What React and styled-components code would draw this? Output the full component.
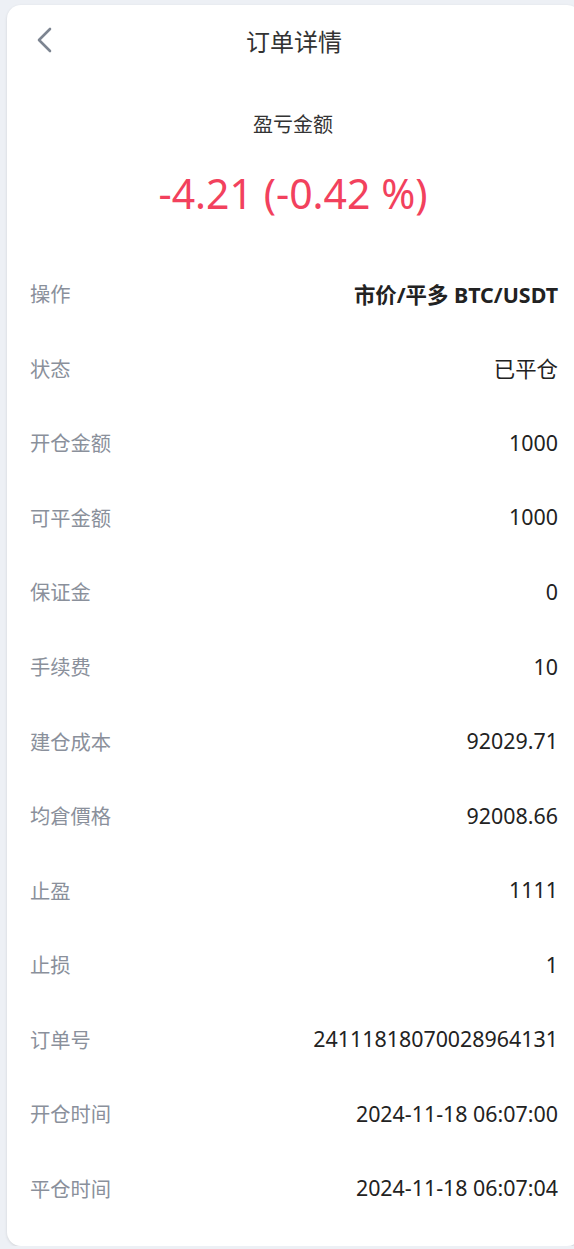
import React from "react";
import styled, { createGlobalStyle } from "styled-components";

const Global = createGlobalStyle`
  html, body { margin: 0; padding: 0; overflow: hidden; }
  body {
    background: #edf0f5;
    font-family: "Noto Sans", "Noto Sans CJK SC", sans-serif;
  }
`;

const Page = styled.div`
  padding: 5px 0 0 7px;
  width: 574px;
`;

const Card = styled.div`
  width: 574px;
  height: 1241px;
  box-sizing: border-box;
  background: #fff;
  border-radius: 14px;
  box-shadow: 0 1px 3px rgba(0, 0, 0, 0.12);
  display: flex;
  flex-direction: column;
`;

const Header = styled.div`
  height: 70px;
  display: flex;
  align-items: center;
  justify-content: center;
  position: relative;
`;

const Back = styled.button`
  position: absolute;
  left: 22px;
  top: 19px;
  width: 30px;
  height: 32px;
  border: 0;
  background: none;
  padding: 0;
  display: flex;
  align-items: center;
  justify-content: center;
`;

const Title = styled.h1`
  margin: 0;
  font-size: 24px;
  font-weight: 400;
  color: #333;
  font-family: "Noto Sans CJK SC", sans-serif;
`;

const Summary = styled.div`
  display: flex;
  flex-direction: column;
  align-items: center;
  padding: 34px 0 35px;
  margin-left: -2px;
`;

const SummaryLabel = styled.div`
  font-size: 20px;
  line-height: 30px;
  color: #333;
  font-family: "Noto Sans CJK SC", sans-serif;
`;

const Amount = styled.div`
  margin-top: 26px;
  font-size: 41px;
  line-height: 56px;
  color: #f2415d;
`;

const List = styled.div`
  display: flex;
  flex-direction: column;
`;

const Row = styled.div`
  height: 74.55px;
  display: flex;
  align-items: center;
  justify-content: space-between;
  padding: 0 23px 0 23px;
`;

const Label = styled.span`
  font-size: 20.3px;
  color: #8a909b;
  font-family: "Noto Sans CJK SC", sans-serif;
`;

const Value = styled.span`
  font-size: 21.4px;
  color: #222;
  font-weight: ${(p) => (p.$bold ? 700 : 400)};
`;

const rows = [
  ["操作", "市价/平多 BTC/USDT", true],
  ["状态", "已平仓"],
  ["开仓金额", "1000"],
  ["可平金额", "1000"],
  ["保证金", "0"],
  ["手续费", "10"],
  ["建仓成本", "92029.71"],
  ["均倉價格", "92008.66"],
  ["止盈", "1111"],
  ["止损", "1"],
  ["订单号", "24111818070028964131"],
  ["开仓时间", "2024-11-18 06:07:00"],
  ["平仓时间", "2024-11-18 06:07:04"],
];

export default function App() {
  return (
    <>
      <Global />
      <Page>
        <Card>
          <Header>
            <Back aria-label="back">
              <svg width="20" height="26" viewBox="0 0 20 26">
                <path
                  d="M16 2 L5 13 L16 24"
                  fill="none"
                  stroke="#7d8591"
                  strokeWidth="2.6"
                  strokeLinecap="round"
                  strokeLinejoin="round"
                />
              </svg>
            </Back>
            <Title>订单详情</Title>
          </Header>
          <Summary>
            <SummaryLabel>盈亏金额</SummaryLabel>
            <Amount>-4.21 (-0.42 %)</Amount>
          </Summary>
          <List>
            {rows.map(([l, v, b]) => (
              <Row key={l}>
                <Label>{l}</Label>
                <Value $bold={b}>{v}</Value>
              </Row>
            ))}
          </List>
        </Card>
      </Page>
    </>
  );
}
